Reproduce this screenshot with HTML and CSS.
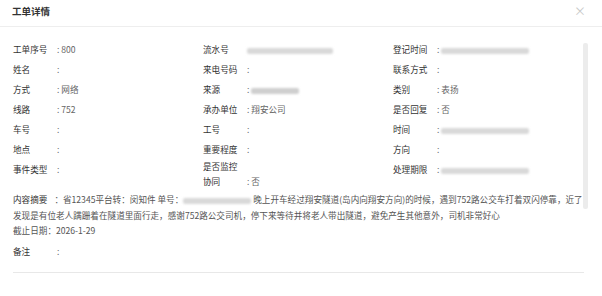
FILE: index.html
```html
<!DOCTYPE html>
<html lang="zh-CN">
<head>
  <meta charset="UTF-8" />
  <meta name="viewport" content="width=device-width, initial-scale=1.0"/>
  <title>工单详情</title>
  <link rel="stylesheet" href="styles.css">
</head>
<body>

  <div class="dialog">
    <!-- Header -->
    <div class="dialog-header">
      <h2 class="dialog-title">工单详情</h2>
      <span class="dialog-close">&times;</span>
    </div>

    <div class="dialog-body">
      <!-- Info grid -->
      <div class="info-grid">
        <div class="item"><span class="label">工单序号</span><span class="value">: 800</span></div>
        <div class="item"><span class="label">流水号</span><span class="value"><span class="blur blur-long"></span></span></div>
        <div class="item"><span class="label">登记时间</span><span class="value">: <span class="blur blur-time"></span></span></div>

        <div class="item"><span class="label">姓名</span><span class="value">:</span></div>
        <div class="item"><span class="label">来电号码</span><span class="value">:</span></div>
        <div class="item"><span class="label">联系方式</span><span class="value">:</span></div>

        <div class="item"><span class="label">方式</span><span class="value">: 网络</span></div>
        <div class="item"><span class="label">来源</span><span class="value">: <span class="blur blur-short"></span></span></div>
        <div class="item"><span class="label">类别</span><span class="value">: 表扬</span></div>

        <div class="item"><span class="label">线路</span><span class="value">: 752</span></div>
        <div class="item"><span class="label">承办单位</span><span class="value">: 翔安公司</span></div>
        <div class="item"><span class="label">是否回复</span><span class="value">: 否</span></div>

        <div class="item"><span class="label">车号</span><span class="value">:</span></div>
        <div class="item"><span class="label">工号</span><span class="value">:</span></div>
        <div class="item"><span class="label">时间</span><span class="value">: <span class="blur blur-time"></span></span></div>

        <div class="item"><span class="label">地点</span><span class="value">:</span></div>
        <div class="item"><span class="label">重要程度</span><span class="value">:</span></div>
        <div class="item"><span class="label">方向</span><span class="value">:</span></div>

        <div class="item"><span class="label">事件类型</span><span class="value">:</span></div>
        <div class="item item-two">
          <div class="label">是否监控</div>
          <div><span class="label">协同</span><span class="value">: 否</span></div>
        </div>
        <div class="item"><span class="label">处理期限</span><span class="value">: <span class="blur blur-time"></span></span></div>
      </div>

      <!-- Summary -->
      <p class="summary"><span class="summary-label">内容摘要</span>：省12345平台转：闵知件 单号：<span class="blur blur-no"></span> 晚上开车经过翔安隧道(岛内向翔安方向)的时候，遇到752路公交车打着双闪停靠，近了发现是有位老人蹒跚着在隧道里面行走，感谢752路公交司机，停下来等待并将老人带出隧道，避免产生其他意外，司机非常好心<br>截止日期：2026-1-29</p>

      <div class="item remark"><span class="label">备注</span><span class="value">:</span></div>

      <div class="divider"></div>

      <div class="scroll-thumb"></div>
    </div>
  </div>

</body>
</html>
```

FILE: styles.css
```css
body {
  margin: 0;
  font-family: "Noto Sans CJK SC", "Noto Sans", sans-serif;
  background: #fff;
}

.dialog {
  width: 602px;
  height: 296px;
  overflow: hidden;
}

.dialog-header {
  height: 27px;
  border-bottom: 1px solid #eeeeee;
  display: flex;
  align-items: center;
  justify-content: space-between;
  padding: 0 16px 0 12px;
  box-sizing: border-box;
}

.dialog-title {
  margin: 0;
  font-size: 9.5px;
  font-weight: bold;
  color: #333;
  line-height: 14px;
  margin-top: -4px;
}

.dialog-close {
  font-size: 12px;
  color: #c8c8c8;
  line-height: 12px;
  margin-top: -4px;
}

.dialog-body {
  position: relative;
  padding: 12px 18px 0 13px;
  font-size: 8.6px;
  color: #666;
}

.info-grid {
  display: grid;
  grid-template-columns: 190px 190px 190px;
}

.item {
  line-height: 20px;
  white-space: nowrap;
}

.item-two {
  line-height: 15px;
}

.label {
  display: inline-block;
  width: 44px;
  color: #333;
}

.summary {
  margin: 3px 0 0;
  line-height: 15.5px;
  color: #555;
}

.summary-label {
  margin-right: 7px;
  color: #333;
}

.remark {
  margin-top: 2px;
}

.divider {
  margin-top: 11px;
  border-top: 1px solid #e8e8e8;
}

.blur {
  display: inline-block;
  height: 6px;
  background: #d9d9d9;
  filter: blur(1.2px);
  border-radius: 2px;
  vertical-align: middle;
}

.blur-long { width: 86px; }
.blur-time { width: 88px; }
.blur-short { width: 48px; background: #cfcfcf; }
.blur-no { width: 68px; }

.scroll-thumb {
  position: absolute;
  left: 583px;
  top: 16px;
  width: 5px;
  height: 166px;
  background: #ececec;
  border-radius: 2px;
}
```
